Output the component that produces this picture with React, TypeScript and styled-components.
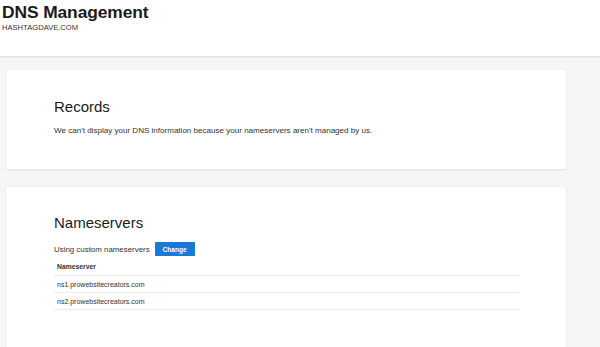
import React from "react";
import styled, { createGlobalStyle } from "styled-components";

const Global = createGlobalStyle`
  html, body { margin: 0; padding: 0; }
  body {
    background: #f5f6f7;
    font-family: "Liberation Sans", Arial, sans-serif;
    color: #2b2b2b;
    width: 600px;
    height: 347px;
    overflow: hidden;
  }
`;

const Page = styled.div`
  display: flex;
  flex-direction: column;
  min-height: 347px;
`;

const Header = styled.header`
  background: #ffffff;
  height: 57px;
  box-sizing: border-box;
  padding: 2px 0 0 2px;
  border-bottom: 1px solid #e2e3e4;
  box-shadow: 0 1px 1px rgba(0, 0, 0, 0.04);
`;

const Title = styled.h1`
  margin: 0;
  font-size: 17.4px;
  line-height: 20px;
  font-weight: 700;
  color: #1b1b1b;
  letter-spacing: -0.1px;
`;

const Domain = styled.div`
  font-size: 7.6px;
  line-height: 9px;
  color: #333;
  margin-top: 1px;
`;

const Main = styled.main`
  display: flex;
  flex-direction: column;
  gap: 18px;
  padding: 13px 34px 0 6px;
`;

const Card = styled.section<{ $top: number; $bottom: number }>`
  background: #ffffff;
  box-shadow: 0 1px 2px rgba(0, 0, 0, 0.08), 0 0 1px rgba(0, 0, 0, 0.06);
  padding: ${(p) => p.$top}px 48px ${(p) => p.$bottom}px 48px;
`;

const CardTitle = styled.h2`
  margin: 0;
  font-size: 15px;
  line-height: 18px;
  font-weight: 400;
  color: #1b1b1b;
`;

const Desc = styled.p`
  margin: 10px 0 0;
  font-size: 8.05px;
  line-height: 10px;
  color: #333;
`;

const StatusRow = styled.div`
  display: flex;
  align-items: center;
  gap: 5px;
  margin-top: 10px;
  height: 14px;
`;

const StatusText = styled.span`
  font-size: 7.9px;
  color: #333;
`;

const Button = styled.button`
  height: 14px;
  width: 40px;
  padding: 0;
  border: none;
  border-radius: 1px;
  background: #1b78d6;
  color: #fff;
  font-family: inherit;
  font-size: 6.6px;
  font-weight: 700;
  cursor: pointer;
`;

const Table = styled.table`
  width: 465px;
  border-collapse: collapse;
`;

const Th = styled.th`
  text-align: left;
  font-size: 6.8px;
  font-weight: 700;
  color: #333;
  height: 18px;
  padding: 1px 0 0 3px;
  border-bottom: 1px solid #e9e9e9;
`;

const Td = styled.td`
  font-size: 7px;
  color: #333;
  height: 16px;
  padding: 0 0 0 3px;
  border-bottom: 1px solid #ececec;
`;

const nameservers = ["ns1.prowebsitecreators.com", "ns2.prowebsitecreators.com"];

export default function App() {
  return (
    <Page>
      <Global />
      <Header>
        <Title>DNS Management</Title>
        <Domain>HASHTAGDAVE.COM</Domain>
      </Header>
      <Main>
        <Card $top={28} $bottom={33}>
          <CardTitle>Records</CardTitle>
          <Desc>
            We can't display your DNS information because your nameservers aren't managed by us.
          </Desc>
        </Card>
        <Card $top={27} $bottom={40}>
          <CardTitle>Nameservers</CardTitle>
          <StatusRow>
            <StatusText>Using custom nameservers</StatusText>
            <Button>Change</Button>
          </StatusRow>
          <Table>
            <thead>
              <tr>
                <Th>Nameserver</Th>
              </tr>
            </thead>
            <tbody>
              {nameservers.map((ns) => (
                <tr key={ns}>
                  <Td>{ns}</Td>
                </tr>
              ))}
            </tbody>
          </Table>
        </Card>
      </Main>
    </Page>
  );
}
